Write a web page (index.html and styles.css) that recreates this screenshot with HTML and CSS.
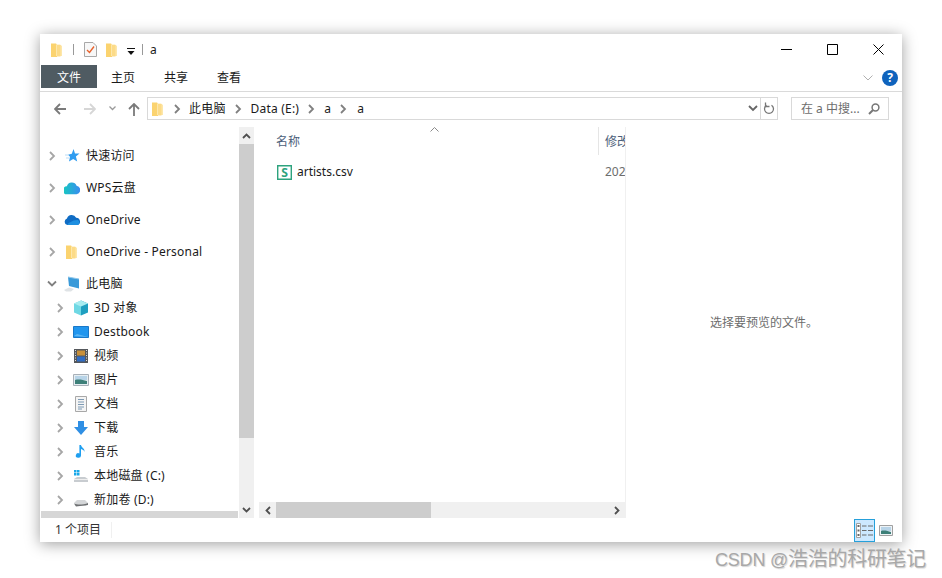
FILE: index.html
```html
<!DOCTYPE html>
<html lang="zh-CN">
<head>
    <meta charset="UTF-8">
    <title>a</title>
    <link rel="stylesheet" href="styles.css">
</head>
<body>
    <svg class="defs" width="0" height="0">
        <defs>
            <symbol id="folder" viewBox="0 0 11 14">
                <path d="M0 .5h5l1 1V14H0z" fill="#fbd36f"/>
                <path d="M5 1.500h4l2 1.500v10H5z" fill="#fde7ab"/>
                <path d="M6 2h3.500v11.500H6z" fill="#fcdb88"/>
            </symbol>
            <symbol id="chev" viewBox="0 0 8 10">
                <path d="M2 1l4 4-4 4" fill="none" stroke="#a6a6a6" stroke-width="1.800"/>
            </symbol>
            <symbol id="chev-dark" viewBox="0 0 8 10">
                <path d="M2 1l4 4-4 4" fill="none" stroke="#808080" stroke-width="1.800"/>
            </symbol>
        </defs>
    </svg>

    <div class="window">
        <div class="titlebar">
            <svg class="qa-folder"><use href="#folder"/></svg>
            <span class="qa-sep"></span>
            <svg class="qa-check" viewBox="0 0 13 15">
                <path d="M.5.5h8.500l3.500 3.500v10.500H.5z" fill="#f7f7f7" stroke="#a8a8a8"/>
                <path d="M3 8l2.500 2.500L10 4.500" fill="none" stroke="#e8622c" stroke-width="1.400"/>
            </svg>
            <svg class="qa-folder2"><use href="#folder"/></svg>
            <svg class="qa-drop" viewBox="0 0 8 8">
                <path d="M0 1h8v1H0z" fill="#111"/>
                <path d="M.5 4h7L4 8z" fill="#111"/>
            </svg>
            <span class="qa-sep qa-sep2"></span>
            <span class="title">a</span>
            <div class="win-btns">
                <svg class="win-btn" viewBox="0 0 11 11"><path d="M0 5.500h11" stroke="#000" fill="none"/></svg>
                <svg class="win-btn" viewBox="0 0 11 11"><path d="M.5.500h10v10H.500z" stroke="#000" fill="none"/></svg>
                <svg class="win-btn" viewBox="0 0 11 11"><path d="M.5.500l10 10M10.500.500l-10 10" stroke="#000" fill="none"/></svg>
            </div>
        </div>

        <div class="ribbon">
            <span class="tab tab-file">文件</span>
            <span class="tab">主页</span>
            <span class="tab">共享</span>
            <span class="tab">查看</span>
            <svg class="ribbon-chev" viewBox="0 0 10 6"><path d="M.5.500L5 5l4.500-4.500" fill="none" stroke="#b0b0b0"/></svg>
            <span class="help">?</span>
        </div>

        <div class="addressbar">
            <svg class="nav-arrow" viewBox="0 0 12 12"><path d="M12 6H1.500M6 1L1 6l5 5" fill="none" stroke="#7a7a7a" stroke-width="1.800"/></svg>
            <svg class="nav-arrow nav-forward" viewBox="0 0 12 12"><path d="M0 6h10.500M6 1l5 5-5 5" fill="none" stroke="#d6d6d6" stroke-width="1.800"/></svg>
            <svg class="nav-recent" viewBox="0 0 7 5"><path d="M.5.500L3.500 3.500l3-3" fill="none" stroke="#9a9a9a" stroke-width="1.300"/></svg>
            <svg class="nav-arrow nav-up" viewBox="0 0 12 13"><path d="M6 13V1.500M1 6l5-5 5 5" fill="none" stroke="#7a7a7a" stroke-width="1.800"/></svg>
            <div class="path-box">
                <svg class="path-folder"><use href="#folder"/></svg>
                <svg class="crumb-chev c1"><use href="#chev-dark"/></svg>
                <span class="crumb">此电脑</span>
                <svg class="crumb-chev c2"><use href="#chev-dark"/></svg>
                <span class="crumb">Data (E:)</span>
                <svg class="crumb-chev c3"><use href="#chev-dark"/></svg>
                <span class="crumb">a</span>
                <svg class="crumb-chev c4"><use href="#chev-dark"/></svg>
                <span class="crumb">a</span>
                <svg class="path-drop" viewBox="0 0 10 7"><path d="M1 1l4 4 4-4" fill="none" stroke="#666" stroke-width="1.800"/></svg>
                <span class="path-refresh">
                    <svg viewBox="0 0 12 13" width="12" height="13">
                        <path d="M8.500 3.200A4.500 4.500 0 1 1 3.500 3.200" fill="none" stroke="#777" stroke-width="1.300"/>
                        <path d="M3.500 0.500v4h4" fill="none" stroke="#777" stroke-width="1.300" transform="translate(-1 0)"/>
                    </svg>
                </span>
            </div>
            <div class="search-box">
                <span>在 a 中搜...</span>
                <svg viewBox="0 0 12 12" width="12" height="12"><circle cx="7.500" cy="4.500" r="3.400" fill="none" stroke="#777" stroke-width="1.500"/><path d="M5 7l-4 4" stroke="#777" stroke-width="2"/></svg>
            </div>
        </div>

        <div class="main">
            <div class="navpane">
                <div class="nav-scrollarea">
                    <div class="tree">
                        <div class="row top">
                            <svg class="exp"><use href="#chev"/></svg>
                            <svg class="ic" viewBox="0 0 16 16"><path d="M9.500 1l1.500 4.500h4.500l-3.600 3 1.300 5L9.200 11 5 13.500l1-4.800-2-2 3.800-1z" fill="#2f9cf0"/><path d="M1 7h3M2 10h3" stroke="#bcdcf5"/></svg>
                            快速访问
                        </div>
                        <div class="row top">
                            <svg class="exp"><use href="#chev"/></svg>
                            <svg class="ic" viewBox="1 2 14 12"><defs><linearGradient id="wps" x1="0" x2="1"><stop offset="0" stop-color="#16c8c0"/><stop offset="1" stop-color="#3a8cf0"/></linearGradient></defs><path d="M4 13.500a3.500 3.500 0 0 1-.5-7A4.500 4.500 0 0 1 12 6a3.800 3.800 0 0 1 0 7.500z" fill="url(#wps)"/></svg>
                            WPS云盘
                        </div>
                        <div class="row top">
                            <svg class="exp"><use href="#chev"/></svg>
                            <svg class="ic" viewBox="0.5 3 14.500 10"><path d="M3.500 12.500a3 3 0 0 1-.3-5.800A4.500 4.500 0 0 1 11.500 6a3.400 3.400 0 0 1 1.500 6.500z" fill="#0f6cc4"/><path d="M3.500 12.500h9.700A2.500 2.500 0 0 0 13 8c-3 0-5 1-6 1.500s-3 1-3.500 3z" fill="#1e8fe0"/></svg>
                            OneDrive
                        </div>
                        <div class="row top">
                            <svg class="exp"><use href="#chev"/></svg>
                            <svg class="ic ic-folder"><use href="#folder"/></svg>
                            OneDrive - Personal
                        </div>
                        <div class="row top">
                            <svg class="exp exp-open" viewBox="0 0 10 8"><path d="M1 1.500l4 4 4-4" fill="none" stroke="#808080" stroke-width="1.800"/></svg>
                            <svg class="ic" viewBox="0 0 16 16"><path d="M0 14l5-2.500 5 1.500-3 2.500H2z" fill="#dfe3e6"/><path d="M4 1l11 2v9.500L5 10z" fill="#3a9ad9"/><path d="M4 1l11 2" stroke="#90c8ec"/></svg>
                            此电脑
                        </div>
                        <div class="row sub">
                            <svg class="exp"><use href="#chev"/></svg>
                            <svg class="ic" viewBox="0 0 16 16"><path d="M8 .5l7 3v9l-7 3z" fill="#1e9fc0"/><path d="M8 .5l-7 3v9l7 3z" fill="#6fd8e4"/><path d="M1 3.500l7 3 7-3-7-3z" fill="#a8ecf0"/></svg>
                            3D 对象
                        </div>
                        <div class="row sub">
                            <svg class="exp"><use href="#chev"/></svg>
                            <svg class="ic" viewBox="0 0 16 16"><path d="M.5 2.500h15v11H.5z" fill="#2196ee" stroke="#1a78c8"/><path d="M1 12l3-2 11 3" fill="#5cb6f4"/></svg>
                            Destbook
                        </div>
                        <div class="row sub">
                            <svg class="exp"><use href="#chev"/></svg>
                            <svg class="ic" viewBox="0 0 16 16"><path d="M1 1h14v14H1z" fill="#55585c"/><path d="M4 2.500h8v5H4z" fill="#c8903a"/><path d="M4 8.500h8v5H4z" fill="#2f6cc4"/><path d="M2 2.500h1M2 5h1M2 7.500h1M2 10h1M2 12.500h1M13 2.500h1M13 5h1M13 7.500h1M13 10h1M13 12.500h1" stroke="#ddd"/></svg>
                            视频
                        </div>
                        <div class="row sub">
                            <svg class="exp"><use href="#chev"/></svg>
                            <svg class="ic" viewBox="0 0 16 16"><path d="M.5 2.500h15v11H.5z" fill="#e6eef2" stroke="#a8b0b8"/><path d="M2 4h12v4H2z" fill="#b8d4e8"/><path d="M2 8c4-1 8 0 12 1v3H2z" fill="#3d7f78"/></svg>
                            图片
                        </div>
                        <div class="row sub">
                            <svg class="exp"><use href="#chev"/></svg>
                            <svg class="ic" viewBox="0 0 16 16"><path d="M2.500.5h11v15h-11z" fill="#f4f4f4" stroke="#a8a8a8"/><path d="M5 3.500h6M5 6h6M5 8.500h6M5 11h6M5 13h4" stroke="#7d9ab4"/></svg>
                            文档
                        </div>
                        <div class="row sub">
                            <svg class="exp"><use href="#chev"/></svg>
                            <svg class="ic" viewBox="0 0 16 16"><path d="M5 1h6v6h4l-7 8-7-8h4z" fill="#2f8fe4"/></svg>
                            下载
                        </div>
                        <div class="row sub">
                            <svg class="exp"><use href="#chev"/></svg>
                            <svg class="ic" viewBox="0 0 16 16"><path d="M8 1v10.500a2.600 2.300 0 1 1-1.600-2.100V1z" fill="#1e9ff0"/><path d="M8 1c.5 3 4 3 3.500 7C11 6 9.500 5.500 8 5z" fill="#1e9ff0"/></svg>
                            音乐
                        </div>
                        <div class="row sub">
                            <svg class="exp"><use href="#chev"/></svg>
                            <svg class="ic" viewBox="0 0 16 16"><path d="M1 11l3-2h8l3 2v3H1z" fill="#c8ccd0"/><path d="M1 11.500h14" stroke="#eee"/><path d="M1 2h2.500v2.500H1zM4 2h2.500v2.500H4zM1 5h2.500v2.500H1zM4 5h2.500v2.500H4z" fill="#19a8e8"/></svg>
                            本地磁盘 (C:)
                        </div>
                        <div class="row sub">
                            <svg class="exp"><use href="#chev"/></svg>
                            <svg class="ic" viewBox="0 0 16 16"><path d="M1 11l3-3h8l3 3-2 3H3z" fill="#d4d6d8"/><path d="M1 11.500c4 2 10 1 14-.5v2l-12 1.500z" fill="#6e7072"/></svg>
                            新加卷 (D:)
                        </div>
                    </div>
                    <div class="vscroll">
                        <span class="sb-btn"><svg viewBox="0 0 9 6" width="9" height="6"><path d="M1 5l3.500-3.500L8 5" fill="none" stroke="#505050" stroke-width="1.800"/></svg></span>
                        <span class="vthumb"></span>
                        <span class="sb-fill"></span>
                        <span class="sb-btn"><svg viewBox="0 0 9 6" width="9" height="6"><path d="M1 1l3.500 3.500L8 1" fill="none" stroke="#505050" stroke-width="1.800"/></svg></span>
                    </div>
                </div>
                <div class="nav-hthumb"></div>
            </div>

            <div class="filepane">
                <svg class="sort-arrow" viewBox="0 0 9 5"><path d="M.5 4.500l4-4 4 4" fill="none" stroke="#8a8a8a"/></svg>
                <div class="list-head">
                    <span class="col-name">名称</span>
                    <span class="col-date">修改日期</span>
                </div>
                <div class="file-row">
                    <svg class="file-ic" viewBox="0 0 16 16"><path d="M.75.75h14.500v14.500H.75z" fill="#fff" stroke="#2ea37e" stroke-width="1.500"/><text x="8" y="12.500" text-anchor="middle" class="file-s">S</text></svg>
                    <span class="file-name">artists.csv</span>
                    <span class="file-date">2021/3/4 10:20</span>
                </div>
                <div class="hscroll">
                    <span class="sb-btn"><svg viewBox="0 0 6 9" width="6" height="9"><path d="M5 1L1.500 4.500 5 8" fill="none" stroke="#505050" stroke-width="1.800"/></svg></span>
                    <span class="hthumb"></span>
                    <span class="sb-fill"></span>
                    <span class="sb-btn"><svg viewBox="0 0 6 9" width="6" height="9"><path d="M1 1l3.500 3.500L1 8" fill="none" stroke="#505050" stroke-width="1.800"/></svg></span>
                </div>
            </div>

            <div class="preview">选择要预览的文件。</div>
        </div>

        <div class="statusbar">
            <span class="count">1 个项目</span>
            <span class="status-sep"></span>
            <span class="view-btn view-on">
                <svg viewBox="0 0 17 15" width="17" height="15">
                    <path d="M.5.500h4v14h-4z" fill="#fff" stroke="#a0a0a0"/>
                    <path d="M1.500 2h2v2h-2zM1.500 6.500h2v2h-2zM1.500 11h2v2h-2z" fill="#666"/>
                    <path d="M6 3h4.500M12 3h5M6 7.500h4.500M12 7.500h5M6 12h4.500M12 12h5" stroke="#6a6a6a"/>
                </svg>
            </span>
            <span class="view-btn">
                <svg viewBox="0 0 14 11" width="14" height="11">
                    <path d="M.5.500h13v10H.5z" fill="#eef3f6" stroke="#a0a0a0"/>
                    <path d="M2 2h10v4H2z" fill="#b8d4e8"/>
                    <path d="M2 6c3-1 7 0 10 1v2H2z" fill="#3d7f78"/>
                </svg>
            </span>
        </div>
    </div>

    <div class="watermark">CSDN @<span class="wm-cjk">浩浩的科研笔记</span></div>
</body>
</html>
```

FILE: styles.css
```css
* {
    box-sizing: border-box;
}
html, body {
    height: 100%;
}
body {
    margin: 0;
    background-color: #fff;
    font-family: "Noto Sans", "Noto Sans CJK SC", sans-serif;
    font-size: 12px;
    color: #1a1a1a;
    overflow: hidden;
    position: relative;
    line-height: 16px;
}
.defs {
    position: absolute;
}
svg {
    display: block;
    flex-shrink: 0;
}
.window {
    margin: 34px 0 0 40px;
    width: 862px;
    height: 508px;
    background-color: #fff;
    box-shadow: 0 2px 14px rgba(0, 0, 0, 0.38);
    display: flex;
    flex-direction: column;
}

/* title bar */
.titlebar {
    height: 31px;
    display: flex;
    align-items: center;
    padding-left: 11px;
}
.qa-folder, .qa-folder2 {
    width: 11px;
    height: 14px;
}
.qa-sep {
    width: 1px;
    height: 11px;
    background-color: #999;
    margin-left: 11px;
}
.qa-check {
    width: 13px;
    height: 15px;
    margin-left: 10px;
}
.qa-folder2 {
    margin-left: 9px;
}
.qa-drop {
    width: 8px;
    height: 8px;
    margin-left: 10px;
    margin-top: 3px;
}
.qa-sep2 {
    margin-left: 7px;
}
.title {
    margin-left: 7px;
}
.win-btns {
    margin-left: auto;
    margin-right: 18px;
    display: flex;
    gap: 35px;
}
.win-btn {
    width: 11px;
    height: 11px;
}

/* ribbon */
.ribbon {
    height: 27px;
    padding-left: 1px;
    border-bottom: 1px solid #dadada;
    display: flex;
    align-items: flex-start;
    position: relative;
}
.tab {
    height: 23px;
    line-height: 25px;
    margin-left: 29px;
    font-size: 12px;
}
.tab-file {
    width: 56px;
    margin-left: 0;
    background-color: #4f5b62;
    color: #fff;
    text-align: center;
}
.tab-file + .tab {
    margin-left: 14px;
}
.ribbon-chev {
    width: 10px;
    height: 6px;
    margin-left: auto;
    margin-top: 10px;
}
.help {
    width: 16px;
    height: 16px;
    margin: 5px 4px 0 9px;
    border-radius: 50%;
    background-color: #0f63bd;
    color: #fff;
    font-weight: bold;
    font-size: 12px;
    line-height: 16px;
    text-align: center;
}

/* address bar */
.addressbar {
    height: 35px;
    padding-top: 5px;
    display: flex;
    align-items: flex-start;
    padding-left: 14px;
}
.nav-arrow {
    width: 12px;
    height: 12px;
    margin-top: 6px;
}
.nav-forward {
    margin-left: 18px;
}
.nav-recent {
    width: 7px;
    height: 5px;
    margin: 9px 0 0 13px;
}
.nav-up {
    height: 13px;
    margin-left: 12px;
}
.path-box {
    width: 631px;
    height: 23px;
    margin-left: 7px;
    border: 1px solid #d9d9d9;
    display: flex;
    align-items: center;
    padding-left: 4px;
}
.path-folder {
    width: 11px;
    height: 14px;
}
.crumb {
    letter-spacing: 0.2px;
}
.crumb-chev {
    width: 8px;
    height: 10px;
}
.c1 { margin: 0 8px 0 10px; }
.c2 { margin: 0 9px 0 8px; }
.c3 { margin: 0 9px 0 8px; }
.c4 { margin: 0 10px 0 8px; }
.path-drop {
    width: 10px;
    height: 7px;
    margin-left: auto;
}
.path-refresh {
    width: 17px;
    height: 21px;
    margin-left: 2px;
    border-left: 1px solid #d9d9d9;
    display: flex;
    align-items: center;
    justify-content: center;
}
.search-box {
    width: 98px;
    height: 23px;
    margin-left: 13px;
    border: 1px solid #d9d9d9;
    display: flex;
    align-items: center;
    justify-content: space-between;
    padding: 0 8px 0 9px;
    color: #6d6d6d;
}

/* main panes */
.main {
    height: 391px;
    display: flex;
}
.navpane {
    width: 214px;
    display: flex;
    flex-direction: column;
}
.nav-scrollarea {
    height: 384px;
    display: flex;
}
.tree {
    width: 199px;
    height: 384px;
    overflow: hidden;
    padding-top: 17px;
}
.row {
    height: 24px;
    display: flex;
    align-items: center;
    white-space: nowrap;
    color: #1a1a1a;
    letter-spacing: 0.2px;
}
.top {
    margin-bottom: 8px;
}
.top:nth-child(5) {
    margin-bottom: 0;
}
.exp {
    width: 8px;
    height: 10px;
    margin-left: 8px;
    margin-right: 9px;
}
.exp-open {
    width: 10px;
    height: 8px;
    margin-left: 7px;
    margin-right: 8px;
}
.ic {
    width: 16px;
    height: 16px;
    margin-left: -1px;
    margin-right: 6px;
}
.ic-folder {
    width: 11px;
    height: 14px;
    margin-left: 1px;
    margin-right: 9px;
}
.sub .exp {
    margin-left: 16px;
    margin-right: 10px;
}
.sub .ic {
    margin-right: 5px;
}
.vscroll {
    width: 15px;
    background-color: #f0f0f0;
    display: flex;
    flex-direction: column;
    height: 391px;
}
.sb-btn {
    flex: 0 0 17px;
    display: flex;
    align-items: center;
    justify-content: center;
    background-color: #f0f0f0;
}
.vthumb {
    height: 294px;
    background-color: #cdcdcd;
}
.sb-fill {
    flex: 1;
    background-color: #f0f0f0;
}
.nav-hthumb {
    width: 197px;
    height: 7px;
    margin-left: 1px;
    background-color: #d6d6d6;
}

/* file list */
.filepane {
    width: 367px;
    margin-left: 5px;
    border-right: 1px solid #f0f0f0;
    display: flex;
    flex-direction: column;
    position: relative;
}
.sort-arrow {
    position: absolute;
    left: 171px;
    top: 0;
    width: 9px;
    height: 5px;
}
.list-head {
    height: 28px;
    display: flex;
    align-items: center;
    color: #4c607a;
    overflow: hidden;
    white-space: nowrap;
}
.col-name {
    width: 340px;
    padding-left: 17px;
    height: 28px;
    line-height: 30px;
    border-right: 1px solid #e5e5e5;
    flex-shrink: 0;
}
.col-date {
    margin-left: 6px;
    margin-top: 2px;
}
.file-row {
    height: 24px;
    margin-top: 5px;
    display: flex;
    align-items: center;
    overflow: hidden;
    white-space: nowrap;
}
.file-ic {
    width: 15px;
    height: 15px;
    margin-left: 18px;
}
.file-s {
    font-family: "Noto Sans", sans-serif;
    font-size: 13px;
    font-weight: bold;
    fill: #2ea37e;
}
.file-name {
    width: 308px;
    margin-left: 5px;
    flex-shrink: 0;
}
.file-date {
    color: #6d6d6d;
}
.hscroll {
    margin-top: auto;
    height: 16px;
    display: flex;
    background-color: #f0f0f0;
}
.hthumb {
    width: 155px;
    background-color: #cdcdcd;
}

/* preview */
.preview {
    flex: 1;
    height: 391px;
    display: flex;
    align-items: center;
    justify-content: center;
    color: #6d6d6d;
    padding-top: 1px;
}

/* status bar */
.statusbar {
    flex: 1;
    display: flex;
    align-items: center;
    padding-left: 15px;
    padding-right: 8px;
}
.count {
    color: #333;
}
.status-sep {
    width: 1px;
    height: 16px;
    margin-left: 10px;
    background-color: #f0f0f0;
    margin-right: auto;
}
.view-btn {
    display: flex;
    align-items: center;
    justify-content: center;
    width: 21px;
    height: 23px;
}
.view-btn + .view-btn {
    margin-left: 3px;
    width: 16px;
    justify-content: flex-start;
    padding-left: 1px;
}
.view-on {
    background-color: #cce8ff;
    border: 1px solid #26a0da;
}

.watermark {
    position: absolute;
    left: 715px;
    top: 545px;
    font-family: "Liberation Sans", sans-serif;
    font-size: 18px;
    line-height: 26px;
    letter-spacing: -0.2px;
    color: #a8a8a8;
    text-shadow: 1px 1px 1px #d4d4d4;
    white-space: nowrap;
}
.wm-cjk {
    font-family: "Noto Sans CJK SC", sans-serif;
    font-size: 20px;
    letter-spacing: -0.3px;
}
```
